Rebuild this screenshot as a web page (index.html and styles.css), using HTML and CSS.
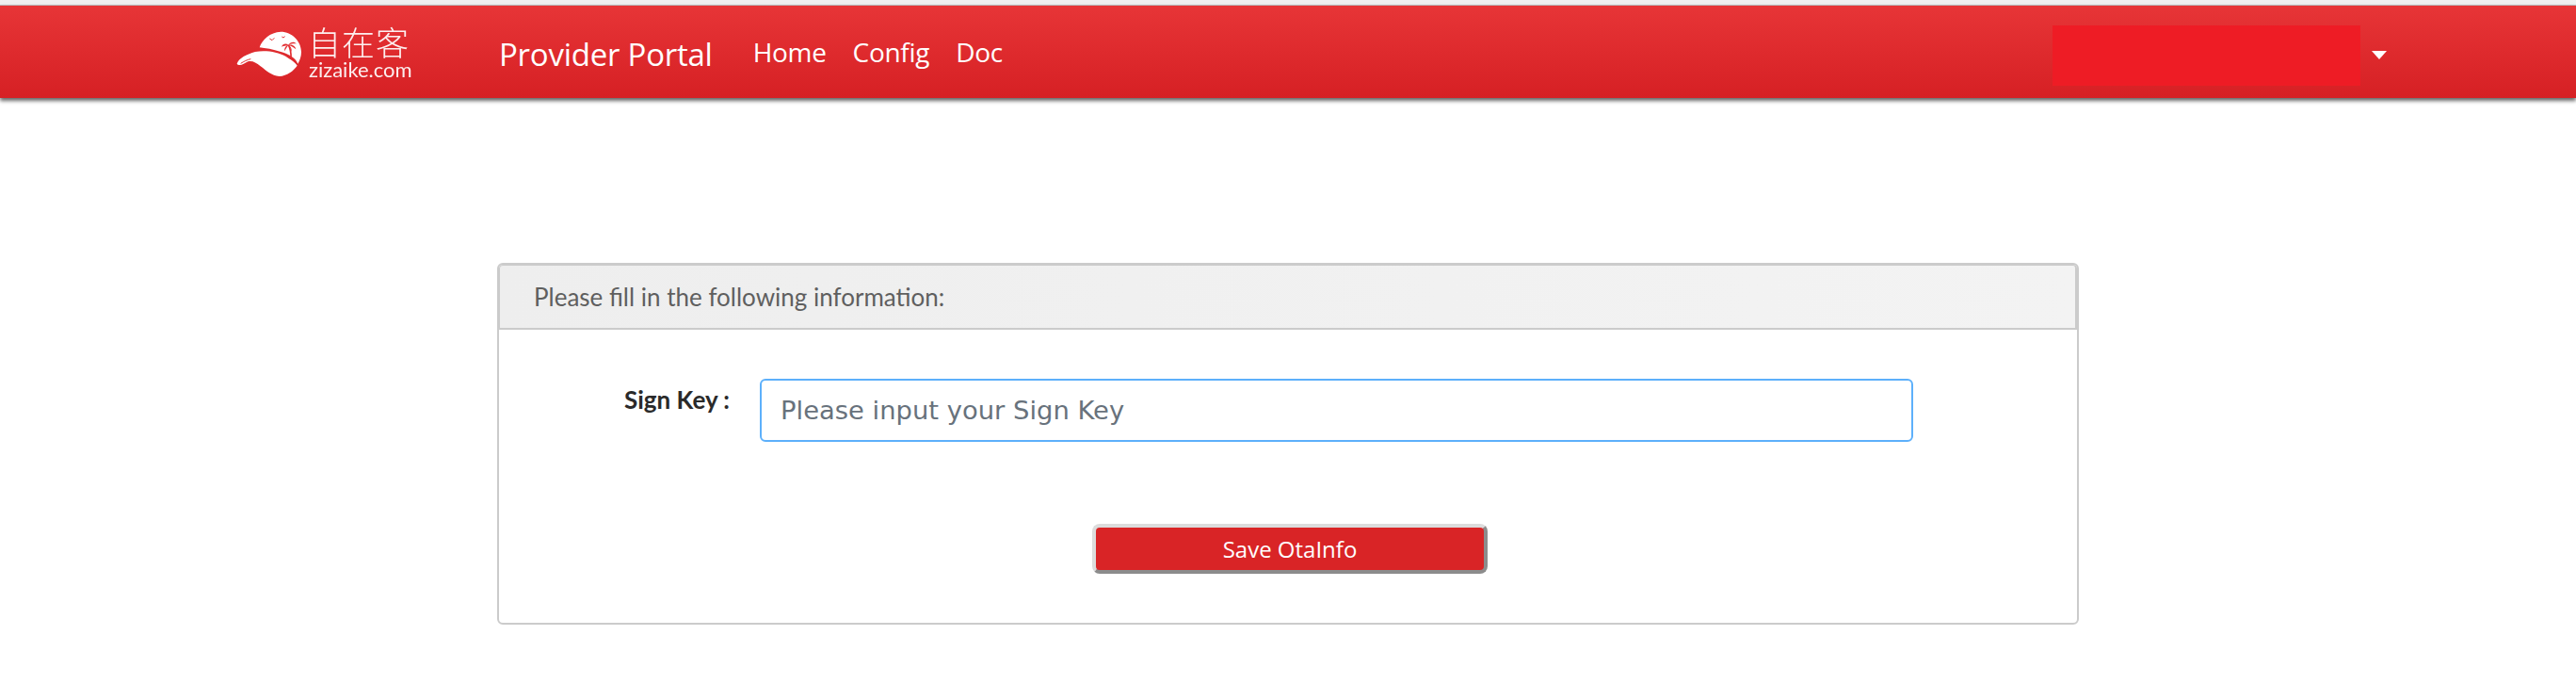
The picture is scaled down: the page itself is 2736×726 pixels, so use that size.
FILE: index.html
```html
<!DOCTYPE html>
<html lang="en">
<head>
<meta charset="utf-8">
<title>Provider Portal</title>
<link rel="stylesheet" href="styles.css">
</head>
<body>
<div class="topstrip"></div>
<header class="navbar">
  <a class="logo" href="#">
    <svg class="logo-mark" viewBox="0 0 255 180" width="85" height="60" aria-hidden="true">
      <path fill="#fff" d="M92 70C100 45 125 22 160 20c35 0 65 30 65 65 0 15-5 27-11 37-9-22-34-32-54-38-25-8-50-12-68-14z"/>
      <path fill="#fff" d="M20 122c5-17 30-30 58-38 32-6 72 0 97 14 15 10 30 18 37 30-12 17-32 32-57 34-25-2-40-17-60-32-15-12-25-18-40-15-13 7-27 17-35 7z"/>
      <path fill="none" stroke="#e33033" stroke-width="3" d="M32 121c10-6 20-12 32-14"/>
      <path fill="none" stroke="#e33033" stroke-width="5" d="M184 62c6 12 9 26 8 42"/>
      <path fill="#e33033" d="M184 62c-8-6-18-4-22 6 7-3 13-4 22-6zM184 62c-8 2-14 10-12 20 4-8 7-13 12-20zM184 62c6-10 18-12 26-4-9-1-17 0-26 4zM184 62c10-3 22 2 24 14-7-6-14-10-24-14zM184 62c6 3 12 12 10 22-2-8-5-15-10-22z"/>
      <path fill="none" stroke="#e33033" stroke-width="3" d="M124 42l8 5 7-7M163 36l5 3 5-4"/>
    </svg>
    <span class="logo-text">
      <span class="logo-cn">自在客</span>
      <span class="logo-en">zizaike.com</span>
    </span>
  </a>
  <a class="brand" href="#">Provider Portal</a>
  <nav class="nav-links">
    <a href="#">Home</a>
    <a href="#">Config</a>
    <a href="#">Doc</a>
  </nav>
  <div class="user">
    <span class="user-mask"></span>
    <span class="caret"></span>
  </div>
</header>
<main class="content">
  <section class="card">
    <div class="card-head">Please fill in the following information:</div>
    <form class="card-body">
      <div class="field">
        <label class="field-label" for="signKey">Sign Key :</label>
        <input class="field-input" id="signKey" type="text" placeholder="Please input your Sign Key">
      </div>
      <div class="actions">
        <button class="save" type="button">Save OtaInfo</button>
      </div>
    </form>
  </section>
</main>
</body>
</html>
```
FILE: styles.css
```css
* { box-sizing: border-box; }
html, body { margin: 0; padding: 0; background: #fff; height: 726px; overflow: hidden; }
body { font-family: "Lato", "Liberation Sans", sans-serif; }
a { color: inherit; text-decoration: none; }

.topstrip { height: 5px; background: #f0f0f0; }
.navbar {
  height: 99px;
  display: flex;
  align-items: center;
  padding-left: 245px;
  color: #fff;
  background: linear-gradient(#e73537, #d62024);
  border-top: 1px solid #b9b9b9;
  box-shadow: 0 3px 4px rgba(0, 0, 0, .6);
  font-family: "Open Sans", "Liberation Sans", sans-serif;
}
.logo { display: flex; align-items: center; width: 285px; filter: blur(.4px); }
.logo-mark { flex: none; margin-top: 3px; }
.logo-text { display: flex; flex-direction: column; align-items: flex-start; margin-left: -2px; opacity: .92; }
.logo-cn { font-family: "Noto Sans CJK SC", sans-serif; font-weight: 300; font-size: 35px; line-height: 38px; letter-spacing: 1px; margin-left: -1px; }
.logo-en { font-family: "Lato", sans-serif; font-size: 22px; line-height: 22px; }
.brand { font-size: 33px; letter-spacing: -.25px; margin-right: 43px; padding-top: 4px; }
.nav-links { display: flex; gap: 28px; font-size: 28px; letter-spacing: -.3px; }
.user { margin-left: auto; margin-right: 201px; margin-top: 7px; display: flex; align-items: center; gap: 12px; }
.user-mask { width: 327px; height: 64px; background: #ee1c25; }
.caret { width: 0; height: 0; border-left: 8.5px solid transparent; border-right: 8.5px solid transparent; border-top: 9px solid #fff; }

.content { padding: 175px 528px 0; }
.card { border: 2px solid #cbcbcb; border-radius: 6px; height: 384px; width: 1680px; }
.card-head {
  height: 69px;
  padding: 0 36px;
  display: flex;
  align-items: center;
  background: linear-gradient(90deg, #eeeeee, #f3f3f3);
  border-top: 1px solid #cbcbcb;
  border-bottom: 2px solid #cbcbcb;
  border-right: 2px solid #cbcbcb;
  border-left: 1px solid #cbcbcb;
  border-radius: 4px 4px 0 0;
  color: #5f5f5f;
  font-size: 26px;
}
.card-body { padding: 52px 0 0; }
.field { display: flex; align-items: flex-start; }
.field-label { width: 245px; text-align: right; font-size: 26px; font-weight: 700; color: #2a2a2a; padding-top: 6px; }
.field-input {
  margin-left: 32px;
  width: 1225px;
  height: 67px;
  padding: 0 20px;
  border: 2px solid #5db0fb;
  border-radius: 6px;
  outline: none;
  font-family: "DejaVu Sans", sans-serif;
  font-size: 27.4px;
  color: #333;
}
.field-input::placeholder { color: #68727c; opacity: 1; }
.actions { display: flex; justify-content: center; margin-top: 87px; padding-left: 4px; }
.save {
  width: 420px;
  height: 53px;
  background: #d92426;
  color: #fff;
  border: 4px solid;
  border-color: #dcdcdc #8c8c8c #8c8c8c #dcdcdc;
  border-radius: 8px;
  font-family: "Open Sans", sans-serif;
  font-size: 24px;
  padding: 0;
}
```
